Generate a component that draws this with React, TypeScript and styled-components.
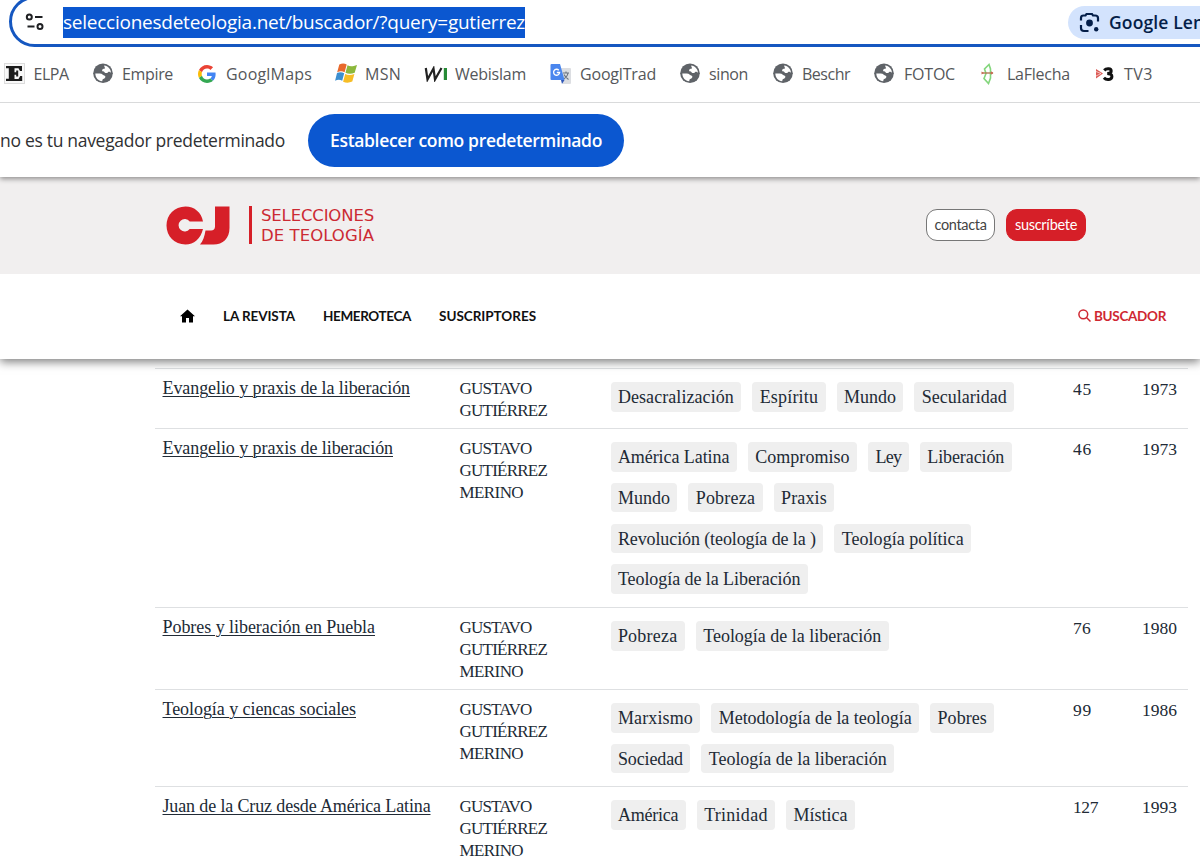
import React, { useLayoutEffect, useRef, useState } from "react";
import styled, { createGlobalStyle } from "styled-components";

const Global = createGlobalStyle`
  * { box-sizing: border-box; }
  html, body { margin: 0; background: #fff; overflow: hidden; }
`;

const ui = `"Open Sans", "Noto Sans", sans-serif`;
const serif = `"Liberation Serif", serif`;
const raleway = `Lato, sans-serif`;

const Run = styled.span`
  display: inline-block;
  width: max-content;
  justify-self: start;
  white-space: pre;
`;

/* Tracks a line of text so that it fills the given width. */
function Fit({ w, children }: { w: number; children: string }) {
  const ref = useRef<HTMLSpanElement>(null);
  const [spacing, setSpacing] = useState(0);
  useLayoutEffect(() => {
    if (ref.current) {
      setSpacing((w - ref.current.getBoundingClientRect().width) / children.length);
    }
  }, [w, children]);
  return <Run ref={ref} style={{ letterSpacing: spacing }}>{children}</Run>;
}

const Page = styled.div`
  width: 1200px;
  height: 864px;
  overflow: hidden;
  display: flex;
  flex-direction: column;
  background: #fff;
`;

/* ---------- browser chrome ---------- */
const AddressRow = styled.div`
  height: 47px;
  flex: none;
  display: flex;
  align-items: flex-end;
  padding-left: 9px;
  overflow: hidden;
`;
const AddressBar = styled.div`
  flex: none;
  width: 1240px;
  height: 51px;
  border: 3px solid #1557c0;
  border-radius: 26px;
  display: flex;
  align-items: center;
  padding: 1px 0 0 13px;
`;
const SiteIcon = styled.svg`
  width: 20px;
  height: 20px;
  flex: none;
`;
const Url = styled.div`
  margin-left: 18px;
  height: 31px;
  width: 462px;
  background: #0b57d0;
  color: #fff;
  font: 400 19px/31px ${ui};
`;
const LensChip = styled.div`
  margin-left: 543px;
  width: 170px;
  height: 33px;
  flex: none;
  border-radius: 17px;
  background: #d3e3fd;
  color: #041e49;
  display: flex;
  align-items: center;
  padding-left: 11px;
  gap: 9px;
  font: 600 17.5px/33px ${ui};
`;
const Bookmarks = styled.div`
  height: 56px;
  flex: none;
  border-bottom: 1px solid #d9dadb;
  display: flex;
  align-items: center;
  padding: 0 0 2px 4px;
`;
const Bookmark = styled.div<{ $w: number; $icon: number }>`
  flex: none;
  width: ${(p) => p.$w}px;
  display: grid;
  grid-template-columns: ${(p) => p.$icon}px 1fr;
  align-items: center;
  color: #55575a;
  font: 400 16px/24px ${ui};
  svg { display: block; }
`;
const InfoBar = styled.div`
  height: 74px;
  flex: none;
  display: flex;
  align-items: center;
  background: #fff;
  position: relative;
  box-shadow: 0 2px 5px rgba(0, 0, 0, 0.4);
  clip-path: inset(0 0 -12px 0);
  z-index: 2;
  color: #303133;
  font: 400 17.5px/28px ${ui};
`;
const DefaultButton = styled.button`
  margin-left: 23px;
  width: 316px;
  height: 53px;
  border: 0;
  padding: 0;
  border-radius: 27px;
  background: #0b57d0;
  color: #fff;
  font: 600 17.5px/28px ${ui};
`;

/* ---------- site header ---------- */
const SiteHeader = styled.header`
  height: 97px;
  flex: none;
  background: #f1efef;
  display: flex;
  align-items: center;
  padding: 0 114px 2px 166px;
`;
const Logo = styled.div`
  display: flex;
  align-items: center;
  padding-top: 1px;
`;
const LogoRule = styled.div`
  width: 3px;
  height: 38px;
  background: #d61f28;
  margin: 0 9px 0 18px;
`;
const LogoText = styled.div`
  color: #cc2a33;
  font: 400 16.5px/20px "DejaVu Sans", sans-serif;
  display: flex;
  flex-direction: column;
  padding-top: 2px;
`;
const HeaderActions = styled.div`
  margin-left: auto;
  display: flex;
  gap: 11px;
`;
const Pill = styled.a<{ $w: number; $solid?: boolean }>`
  width: ${(p) => p.$w}px;
  height: 32px;
  border-radius: 11px;
  border: 1px solid ${(p) => (p.$solid ? "#d61f28" : "#777")};
  background: ${(p) => (p.$solid ? "#d61f28" : "#fff")};
  color: ${(p) => (p.$solid ? "#fff" : "#444")};
  text-align: center;
  font: 400 14.5px/29px ${raleway};
`;
const Nav = styled.nav`
  height: 85px;
  flex: none;
  background: #fff;
  position: relative;
  z-index: 1;
  box-shadow: 0 3px 9px rgba(0, 0, 0, 0.5);
  clip-path: inset(0 0 -16px 0);
  display: flex;
  align-items: center;
  padding: 0 34px 2px 180px;
  color: #111;
  font: 700 13.5px/20px ${raleway};
`;
const NavLinks = styled.div`
  display: flex;
  gap: 28px;
  margin-left: 28px;
`;
const Search = styled.a`
  margin-left: auto;
  display: flex;
  align-items: center;
  gap: 3px;
  color: #cf2731;
`;

/* ---------- results ---------- */
const Results = styled.main`
  flex: none;
  margin: 9px 12px 0 155px;
  color: #212a35;
  font: 400 18px/22.2px ${serif};
`;
const Row = styled.div<{ $h: number }>`
  height: ${(p) => p.$h}px;
  border-top: 1px solid #dee0e2;
  display: grid;
  grid-template-columns: 297px 151px 462.5px 69px 1fr;
  padding-left: 7.5px;
`;
const Title = styled.a`
  padding-top: 8px;
  span {
    text-decoration: underline;
    text-decoration-thickness: 1px;
    text-underline-offset: 2px;
  }
`;
const Author = styled.div`
  padding-top: 8.5px;
  display: flex;
  flex-direction: column;
  font-size: 17px;
`;
const TagLines = styled.div`
  padding-top: 13px;
  display: flex;
  flex-direction: column;
  gap: 11.3px;
`;
const TagLine = styled.div`
  display: flex;
  gap: 11px;
`;
const Tag = styled.span`
  height: 29.5px;
  flex: none;
  padding: 0 7.4px;
  border-radius: 4px;
  background: #efefef;
  line-height: 30px;
`;
const Num = styled.div`
  padding-top: 9px;
  font-size: 17.5px;
`;

const Globe = () => (
  <svg width="21" height="21" viewBox="0 0 21 21">
    <circle cx="10" cy="10.3" r="9.8" fill="#5f6368" />
    <path fill="#fff" d="M11.2 2.6c3.900.4 6.600 3.500 6.800 7.300-.9-1-1.600-1.100-2.800-1-.9 1.300-2.100 1.500-3.400.9-.3-1.100-1.300-1.600-2.600-1.500-.3-1.500.3-2.400 1.700-2.500 1-.1 1.300-.6.9-1.300-.3-.6-.7-1-.6-1.900zM2.300 10.500c2.100-.2 4.300-.2 6.100.3 1.300.4 1.400 1.500 2.600 1.600 1.300.2 1.600.9 1.200 2-.5 1.300-2.100 1-2.600 2.100-.3.6-.2 1.200-.4 1.800-3.800-.3-6.800-3.500-6.900-7.800z" />
  </svg>
);
const ElPais = () => (
  <svg width="21" height="21" viewBox="0 0 21 21">
    <rect x=".5" y=".5" width="20" height="20" fill="#f8f8f8" stroke="#dcdcdc" />
    <path fill="#1c1c1c" d="M2 3h16v5h-2l-1.500-2.700h-4v3.900h1.700V7.500h2v6h-2v-1.700h-1.700v4.100h4l1.700-3h2V18H2v-2.300h2.800V5.300H2z" />
  </svg>
);
const GoogleG = () => (
  <svg width="18" height="18" viewBox="0 0 48 48">
    <path fill="#EA4335" d="M24 9.500c3.540 0 6.710 1.220 9.210 3.600l6.850-6.850C35.900 2.380 30.470 0 24 0 14.620 0 6.510 5.380 2.560 13.220l7.980 6.190C12.430 13.720 17.740 9.500 24 9.500z" />
    <path fill="#4285F4" d="M46.980 24.550c0-1.570-.150-3.090-.380-4.550H24v9.020h12.940c-.580 2.960-2.260 5.480-4.780 7.180l7.730 6c4.510-4.180 7.090-10.360 7.090-17.650z" />
    <path fill="#FBBC05" d="M10.530 28.590c-.480-1.450-.760-2.990-.760-4.590s.270-3.140.760-4.590l-7.980-6.190C.920 16.460 0 20.120 0 24s.920 7.540 2.560 10.780l7.970-6.190z" />
    <path fill="#34A853" d="M24 48c6.480 0 11.930-2.130 15.890-5.810l-7.730-6c-2.150 1.450-4.920 2.300-8.160 2.300-6.260 0-11.570-4.220-13.470-9.910l-7.980 6.190C6.510 42.620 14.620 48 24 48z" />
  </svg>
);
const Windows = () => (
  <svg width="23" height="21" viewBox="0 0 23 21">
    <path fill="#e8692c" d="M4.300 1.600C7 .1 9.400.2 11.700 1.500l-2.100 7.800C7.300 8 5 7.900 2.200 9.200z" />
    <path fill="#8cb83c" d="M12.500 2.300c2.500 1.400 5.300 1.300 9.500-.4l-2.300 7.900c-3.200 1.300-6.300 1.400-9.200 0z" />
    <path fill="#3c8fd0" d="M2 10.100c2.500-1.200 4.900-1.200 7.200.2l-2 7.500C5 16.400 2.700 16.400.1 17.700z" />
    <path fill="#f6bd26" d="M10.200 10.900c2.700 1.300 5.600 1.300 9.200 0l-2.100 7.700c-3.200 1.500-6.300 1.500-9.200.1z" />
  </svg>
);
const Webislam = () => (
  <svg width="24" height="16" viewBox="0 0 24 16">
    <path d="M1.800 2L3.500 13.500L9.500 2.500L11 13.500L17.500 2" fill="none" stroke="#222" strokeWidth="2.200" />
    <path d="M19.800 2h3.200v12h-3.200z" fill="#278b36" />
  </svg>
);
const Translate = () => (
  <svg width="22" height="22" viewBox="0 0 22 22">
    <path d="M8 5h12q1 0 1 1v14q0 1-1 1h-7z" fill="#dcdee2" />
    <path d="M13 10h6M16 8.500V10M18 10c-.5 3-2.500 5-4.500 6M14 11.500c1 2.200 2.500 3.500 4.500 5" stroke="#6b7480" strokeWidth="1.100" fill="none" />
    <path d="M1.500 1h8.500l4.500 16H1.500q-1 0-1-1V2q0-1 1-1z" fill="#4a86ee" />
    <path d="M11 17h3.500L12 21z" fill="#2f57b8" />
    <path d="M8.800 7.200A3 3 0 1 0 9.600 9.500H6.800" stroke="#fff" strokeWidth="1.300" fill="none" />
  </svg>
);
const Arrow = () => (
  <svg width="16" height="22" viewBox="0 0 16 22">
    <path d="M8 1.500L3.500 6L5 10.500L3 15.500L7.500 20.500L9.500 15V6z" stroke="#83d67c" strokeWidth="1.600" fill="none" />
    <path d="M1 10h11" stroke="#b07855" strokeWidth="1.400" />
    <path d="M.5 8.500L3 10 .5 11.500zM10 8.300l2.500 1.700-2.500 1.700z" fill="#c76c54" />
  </svg>
);
const Tv3 = () => (
  <svg width="19" height="16" viewBox="0 0 19 16">
    <path d="M1 3L8 7.600L1 12.500z" fill="#dc5a55" />
    <path d="M1 5.500l5 2M1 10l5-2.500" stroke="#fff" strokeWidth=".6" />
    <path d="M9.200 4.400c2.300-2.400 7-2 7 .6 0 1.800-1.500 2.500-4 2.500 3 0 4.700.9 4.700 3 0 3.400-5.500 3.900-8 1.200" stroke="#111" strokeWidth="3" fill="none" />
  </svg>
);

const bookmarks: { label: string; w: number; slot: number; size: number; icon: React.ReactNode }[] = [
  { label: "ELPA", w: 35, slot: 29.5, size: 88.5, icon: <ElPais /> },
  { label: "Empire", w: 51, slot: 29.5, size: 105.5, icon: <Globe /> },
  { label: "GooglMaps", w: 86, slot: 28, size: 137, icon: <GoogleG /> },
  { label: "MSN", w: 36, slot: 30, size: 89, icon: <Windows /> },
  { label: "Webislam", w: 71, slot: 31, size: 126, icon: <Webislam /> },
  { label: "GooglTrad", w: 76, slot: 30, size: 130, icon: <Translate /> },
  { label: "sinon", w: 39, slot: 29, size: 93, icon: <Globe /> },
  { label: "Beschr", w: 48, slot: 29, size: 101, icon: <Globe /> },
  { label: "FOTOC", w: 51, slot: 30, size: 107, icon: <Globe /> },
  { label: "LaFlecha", w: 63, slot: 26, size: 114, icon: <Arrow /> },
  { label: "TV3", w: 29, slot: 29, size: 70, icon: <Tv3 /> },
];

type T = [string, number];
const G: T = ["GUSTAVO", 72];
const Z: T = ["GUTIÉRREZ", 87.5];
const M: T = ["MERINO", 63.5];
const rows: { h: number; title: T; author: T[]; tags: T[][]; num: T; year: string }[] = [
  {
    h: 60, title: ["Evangelio y praxis de la liberación", 247.5], author: [G, Z],
    tags: [[["Desacralización", 116], ["Espíritu", 58.5], ["Mundo", 52], ["Secularidad", 85]]],
    num: ["45", 19], year: "1973",
  },
  {
    h: 179, title: ["Evangelio y praxis de liberación", 230.5], author: [G, Z, M],
    tags: [
      [["América Latina", 111.5], ["Compromiso", 94.5], ["Ley", 26], ["Liberación", 77]],
      [["Mundo", 52], ["Pobreza", 59.5], ["Praxis", 46]],
      [["Revolución (teología de la )", 198], ["Teología política", 122]],
      [["Teología de la Liberación", 182.5]],
    ],
    num: ["46", 19], year: "1973",
  },
  {
    h: 82, title: ["Pobres y liberación en Puebla", 212.5], author: [G, Z, M],
    tags: [[["Pobreza", 59.5], ["Teología de la liberación", 178]]],
    num: ["76", 18], year: "1980",
  },
  {
    h: 97, title: ["Teología y ciencas sociales", 193.5], author: [G, Z, M],
    tags: [
      [["Marxismo", 75], ["Metodología de la teología", 193], ["Pobres", 49.5]],
      [["Sociedad", 65], ["Teología de la liberación", 178]],
    ],
    num: ["99", 19], year: "1986",
  },
  {
    h: 97, title: ["Juan de la Cruz desde América Latina", 268], author: [G, Z, M],
    tags: [[["América", 60.5], ["Trinidad", 63.5], ["Mística", 54]]],
    num: ["127", 25], year: "1993",
  },
];

export default function App() {
  return (
    <Page>
      <Global />
      <AddressRow>
        <AddressBar>
          <SiteIcon viewBox="0 0 20 20" fill="none" stroke="#1f2023" strokeWidth="2">
            <circle cx="4.300" cy="5" r="2.500" />
            <path d="M10 5h7.500M2.500 14.500h7" />
            <circle cx="15" cy="14.500" r="2.500" />
          </SiteIcon>
          <Url><Fit w={462}>seleccionesdeteologia.net/buscador/?query=gutierrez</Fit></Url>
          <LensChip>
            <svg width="21" height="21" viewBox="0 0 21 21" fill="none" stroke="#041e49" strokeWidth="2.200">
              <path d="M2 8.500V6q0-2.500 2.500-2.500h2L7.500 2h5.500l1 1.500h2Q19 3.500 19 6v3.500M2 13v3q0 3 3 3h4.500" />
              <circle cx="10.500" cy="11" r="3.400" fill="#041e49" stroke="none" />
              <circle cx="17.200" cy="17.200" r="2.200" fill="#041e49" stroke="none" />
            </svg>
            <Fit w={104}>Google Lens</Fit>
          </LensChip>
        </AddressBar>
      </AddressRow>
      <Bookmarks>
        {bookmarks.map((b) => (
          <Bookmark key={b.label} $w={b.size} $icon={b.slot}>
            {b.icon}
            <Fit w={b.w}>{b.label}</Fit>
          </Bookmark>
        ))}
      </Bookmarks>
      <InfoBar>
        <Fit w={285}>no es tu navegador predeterminado</Fit>
        <DefaultButton><Fit w={272}>Establecer como predeterminado</Fit></DefaultButton>
      </InfoBar>
      <SiteHeader>
        <Logo>
          <svg width="65" height="39" viewBox="0 0 65 39">
            <path fill="#d61f28" d="M37 15.500C35.500 6.500 28.500.5 19.500.5 8.500.5.500 9 .500 19.500S8.500 38.500 19.500 38.500c8.500 0 15-5.500 17.500-15.500H23.700a6.200 6.200 0 1 1 0-7.500z" />
            <path fill="#d61f28" d="M49 .5h14.500V22c0 10.500-6.500 16.500-16 16.500H34c3-3.500 4.500-8 5.500-14h5.500c2.500 0 4-1.500 4-4z" />
          </svg>
          <LogoRule />
          <LogoText>
            <Fit w={113}>SELECCIONES</Fit>
            <Fit w={113}>DE TEOLOGÍA</Fit>
          </LogoText>
        </Logo>
        <HeaderActions>
          <Pill $w={69}><Fit w={52}>contacta</Fit></Pill>
          <Pill $w={80} $solid><Fit w={62}>suscríbete</Fit></Pill>
        </HeaderActions>
      </SiteHeader>
      <Nav>
        <svg width="15" height="14" viewBox="0 0 15 14">
          <path fill="#000" d="M7.500.5L15 7.300H13V13.500H9V9H6v4.500H2V7.300H0z" />
        </svg>
        <NavLinks>
          <Fit w={72}>LA REVISTA</Fit>
          <Fit w={88}>HEMEROTECA</Fit>
          <Fit w={97}>SUSCRIPTORES</Fit>
        </NavLinks>
        <Search>
          <svg width="13" height="13" viewBox="0 0 13 13" fill="none" stroke="#cf2731" strokeWidth="1.500">
            <circle cx="5.300" cy="5.300" r="4.400" />
            <path d="M8.500 8.500L12.500 12.500" />
          </svg>
          <Fit w={72}>BUSCADOR</Fit>
        </Search>
      </Nav>
      <Results>
        {rows.map((r) => (
          <Row key={r.title[0]} $h={r.h}>
            <Title><Fit w={r.title[1]}>{r.title[0]}</Fit></Title>
            <Author>
              {r.author.map(([t, w]) => <Fit key={t} w={w}>{t}</Fit>)}
            </Author>
            <TagLines>
              {r.tags.map((line, i) => (
                <TagLine key={i}>
                  {line.map(([t, w]) => <Tag key={t}><Fit w={w}>{t}</Fit></Tag>)}
                </TagLine>
              ))}
            </TagLines>
            <Num><Fit w={r.num[1]}>{r.num[0]}</Fit></Num>
            <Num><Fit w={35}>{r.year}</Fit></Num>
          </Row>
        ))}
      </Results>
    </Page>
  );
}
